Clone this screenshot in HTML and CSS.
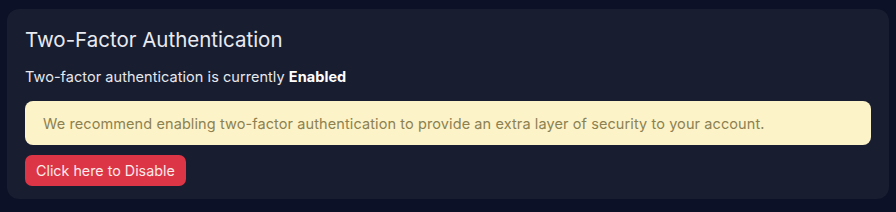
FILE: index.html
```html
<!DOCTYPE html>
<html lang="en">
<head>
    <meta charset="UTF-8">
    <meta name="viewport" content="width=device-width, initial-scale=1.0">
    <title>Two-Factor Authentication</title>
    <link rel="stylesheet" href="styles.css">
</head>
<body>
    <div class="card">
        <h2 class="card-title">Two-Factor Authentication</h2>
        <p class="status">Two-factor authentication is currently <strong>Enabled</strong></p>
        <div class="alert">We recommend enabling two-factor authentication to provide an extra layer of security to your account.</div>
        <button class="btn-danger">Click here to Disable</button>
    </div>
</body>
</html>
```

FILE: styles.css
```css
/* Page */
body {
    margin: 0;
    padding: 9px 7px 14px 7px;
    background: #0c1127;
    font-family: 'Inter', 'Open Sans', sans-serif;
    color: #e6e8ee;
}

.card {
    background: #181d30;
    border-radius: 12px;
    padding: 18px 18px 13px 18px;
}

.card-title {
    margin: 0 0 16px 0;
    font-size: 20.5px;
    font-weight: 400;
    color: #e8eaf0;
}

.status {
    margin: 0 0 16px 0;
    font-size: 14.5px;
    letter-spacing: 0.05px;
}

.status strong {
    font-weight: 700;
    color: #fff;
}

.alert {
    background: #fdf3c9;
    color: #8c8150;
    border-radius: 8px;
    padding: 14px 18px 13px 18px;
    font-size: 14.5px;
    letter-spacing: 0.1px;
    margin-bottom: 10px;
}

.btn-danger {
    background: #dc3545;
    color: #fbe9ea;
    border: none;
    border-radius: 7px;
    padding: 7px 11px;
    font-family: inherit;
    font-size: 14.3px;
    cursor: pointer;
}
```
